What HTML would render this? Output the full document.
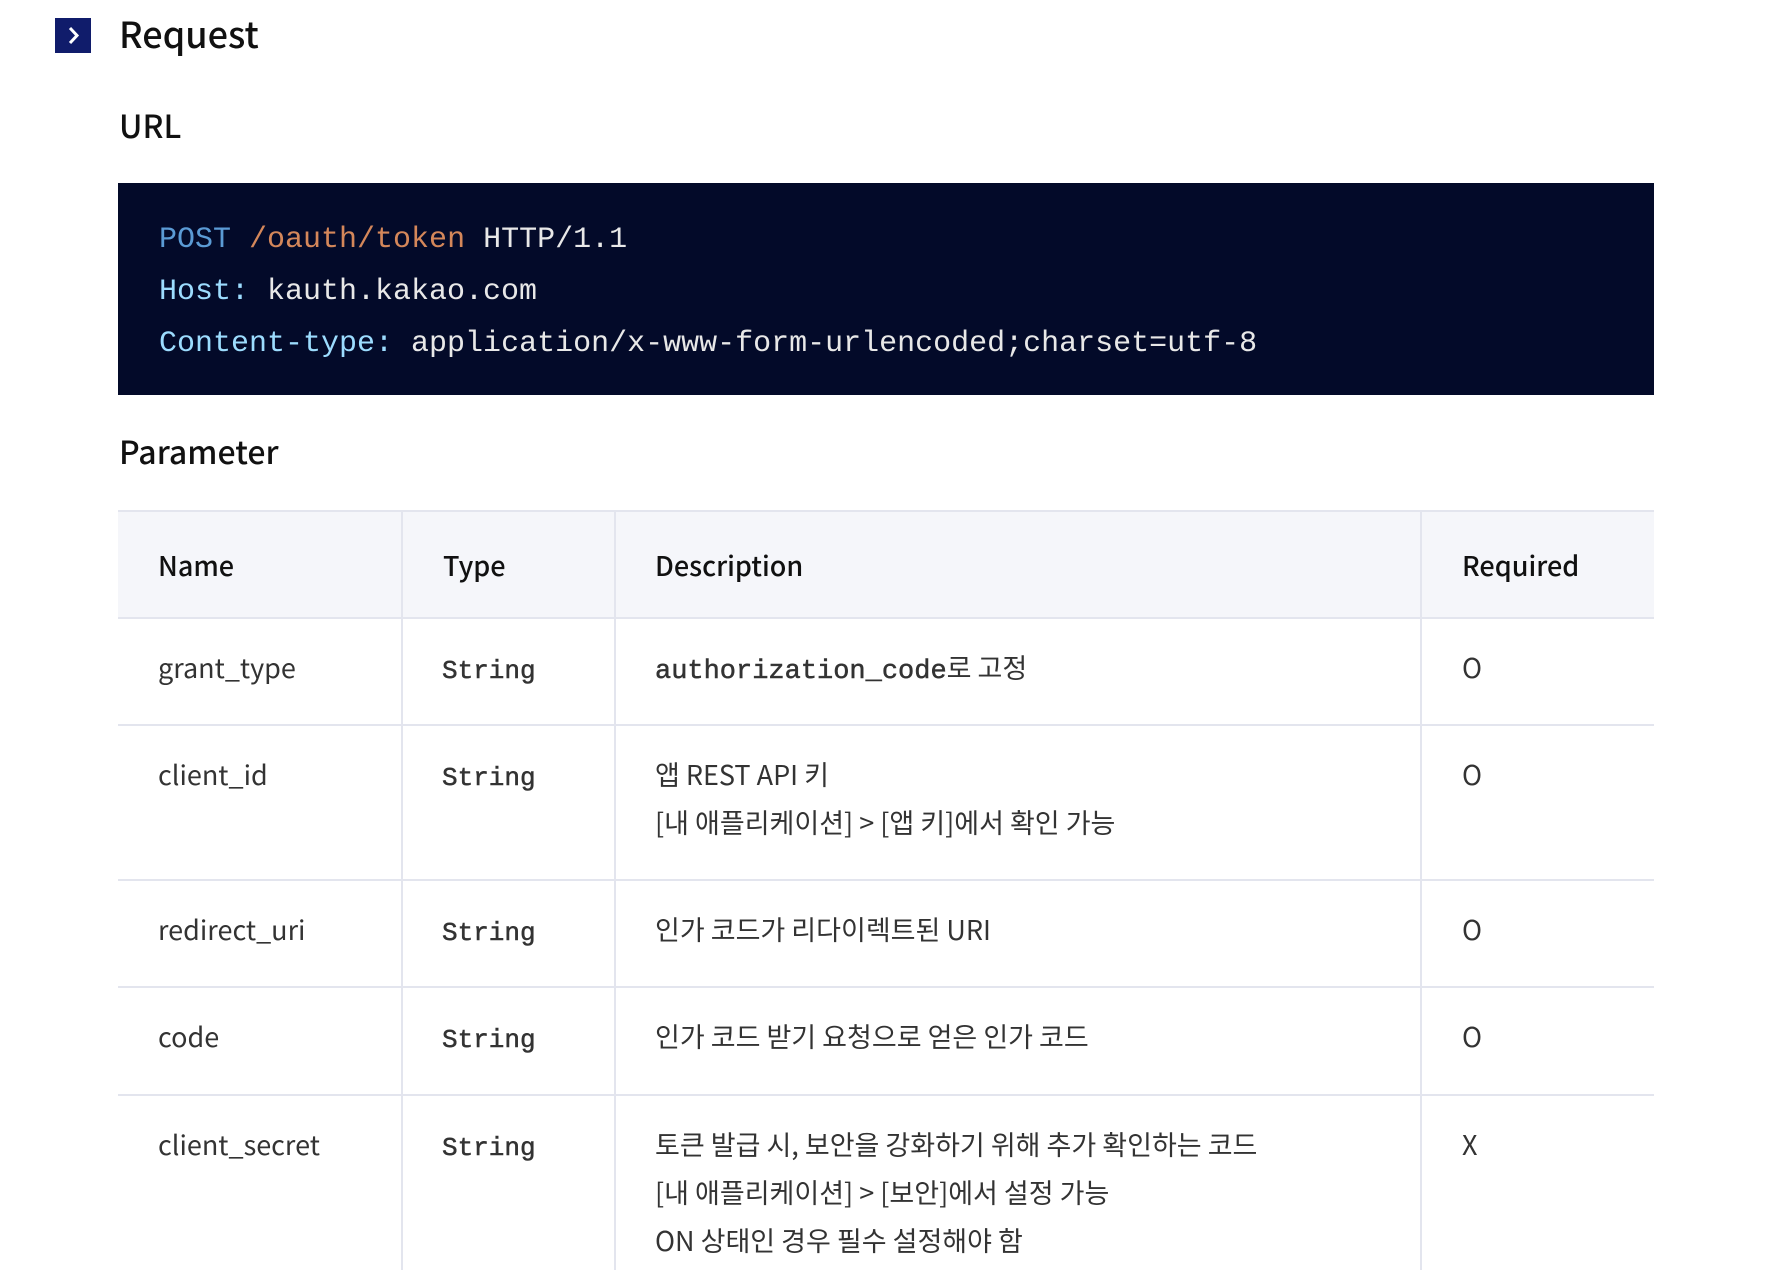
<!DOCTYPE html>
<html style="overflow:hidden"><head><meta charset="utf-8"><style>
*{margin:0;padding:0;box-sizing:border-box}
html,body{width:1772px;height:1270px;overflow:hidden}
body{background:#fff;font-family:"Liberation Sans","Noto Sans CJK KR",sans-serif;color:#111}
#w{position:relative;width:1772px;height:1270px;overflow:hidden}
.icon{position:absolute;left:55px;top:18px;width:36px;height:35px;background:#101c6b}
h1{position:absolute;left:119px;top:7px;font-size:36px;font-weight:500;font-family:"Noto Sans CJK KR",sans-serif}
h2{position:absolute;left:119px;font-size:32px;font-weight:500;font-family:"Noto Sans CJK KR",sans-serif}
.code{position:absolute;left:118px;top:183px;width:1536px;height:212px;background:#030a29;padding:31px 0 0 41px;font-family:"Liberation Mono",monospace;font-size:30px;line-height:52px;color:#e8e8e8;white-space:pre}
.b{color:#5b9bd5}.o{color:#d4875a}.k{color:#9cdcfe}
table{position:absolute;left:118px;top:510px;width:1536px;border-collapse:collapse;font-family:"Noto Sans CJK KR",sans-serif;font-size:27px;color:#333}
td,th{border:2px solid #e3e5ee;border-left:none;border-right:2px solid #e3e5ee;vertical-align:top;padding:24px 0 20px 40px;line-height:48px;text-align:left}
td:last-child,th:last-child{border-right:none}
th{background:#f5f6fa;font-weight:500;color:#111;height:107px;vertical-align:middle;padding-top:0;padding-bottom:0}
.m{font-family:"Liberation Mono",monospace;font-size:26px;padding-top:28px;padding-left:39px;color:#333;-webkit-text-stroke:0.5px #333}
.d{padding-left:39px}
.mm{font-family:"Liberation Mono",monospace;font-size:27px;color:#333;-webkit-text-stroke:0.5px #333}
</style></head><body><div id="w">
<div class="icon"><svg width="36" height="35" viewBox="0 0 36 35"><path d="M15 10l7 7.5-7 7.5" stroke="#fff" stroke-width="3" fill="none"/></svg></div>
<h1>Request</h1>
<h2 style="top:102px">URL</h2>
<div class="code"><span class="b">POST</span> <span class="o">/oauth/token</span> HTTP/1.1
<span class="k">Host:</span> kauth.kakao.com
<span class="k">Content-type:</span> application/x-www-form-urlencoded;charset=utf-8</div>
<h2 style="top:428px;font-size:32px">Parameter</h2>
<table>
<colgroup><col style="width:284px"><col style="width:213px"><col style="width:806px"><col></colgroup>
<tr><th>Name</th><th>Type</th><th class="d">Description</th><th>Required</th></tr>
<tr style="height:107px"><td>grant_type</td><td class="m">String</td><td class="d"><span class="mm">authorization_code</span>로 고정</td><td>O</td></tr>
<tr style="height:155px"><td>client_id</td><td class="m">String</td><td class="d">앱 REST API 키<br>[내 애플리케이션] &gt; [앱 키]에서 확인 가능</td><td>O</td></tr>
<tr style="height:107px"><td>redirect_uri</td><td class="m">String</td><td class="d">인가 코드가 리다이렉트된 URI</td><td>O</td></tr>
<tr style="height:108px"><td>code</td><td class="m">String</td><td class="d">인가 코드 받기 요청으로 얻은 인가 코드</td><td>O</td></tr>
<tr style="height:200px"><td>client_secret</td><td class="m">String</td><td class="d">토큰 발급 시, 보안을 강화하기 위해 추가 확인하는 코드<br>[내 애플리케이션] &gt; [보안]에서 설정 가능<br>ON 상태인 경우 필수 설정해야 함</td><td>X</td></tr>
</table>
</div></body></html>
